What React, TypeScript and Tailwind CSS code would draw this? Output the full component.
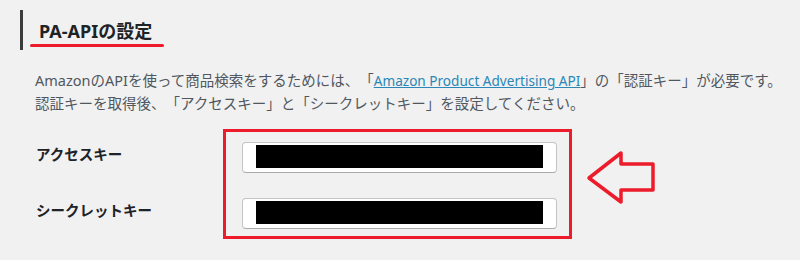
const font = { fontFamily: '"Noto Sans", "Noto Sans CJK JP", sans-serif' };

function KeyInput() {
  return (
    <div className="w-[315px] h-[31px] bg-white border border-[#c3c4c7] border-b-[#a7aaad] rounded-[4px] pl-[13px] pt-[2px]">
      <div className="w-[287px] h-[23px] bg-black" />
    </div>
  );
}

function LeftArrow() {
  return (
    <svg width="72" height="57" viewBox="0 0 72 57" className="ml-[13px] mt-[20px] shrink-0">
      <path
        d="M4 29 L36 4 L36 15 L68 15 L68 41 L36 41 L36 53 Z"
        fill="none"
        stroke="#ec1c2a"
        strokeWidth="3.5"
        strokeLinejoin="round"
      />
    </svg>
  );
}

export default function App() {
  return (
    <div className="w-[800px] h-[260px] bg-[#f1f1f1] overflow-hidden pt-[10px] pl-5" style={font}>
      <div className="h-10 border-l-[3px] border-[#3c3c3c] pt-[9px]">
        <h2 className="pl-[16px] text-[18px] leading-[24px] font-bold text-[#1d2327]">PA-APIの設定</h2>
        <div className="ml-[7px] mt-[1px] w-[134px] h-[3px] rounded-full bg-[#ec1c2a]" />
      </div>

      <p className="mt-[19px] pl-[15px] text-[14.5px] leading-[22px] text-[#50575e] whitespace-nowrap [text-spacing-trim:space-all]">
        AmazonのAPIを使って商品検索をするためには、「
        <a className="text-[13.6px] text-[#2a87b8] underline">Amazon Product Advertising API</a>
        」の「認証キー」が必要です。
        <br />
        認証キーを取得後、「アクセスキー」と「シークレットキー」を設定してください。
      </p>

      <div className="mt-[15px] flex">
        <div className="w-[203px] pl-[16px] pt-[15px] flex flex-col gap-[36px] text-[14.5px] leading-[20px] font-bold text-[#1d2327]">
          <span>アクセスキー</span>
          <span>シークレットキー</span>
        </div>
        <div className="border-[3px] border-[#ec1c2a] pl-4 pr-3 pt-[10px] pb-[7px] flex flex-col gap-[25px]">
          <KeyInput />
          <KeyInput />
        </div>
        <LeftArrow />
      </div>
    </div>
  );
}
